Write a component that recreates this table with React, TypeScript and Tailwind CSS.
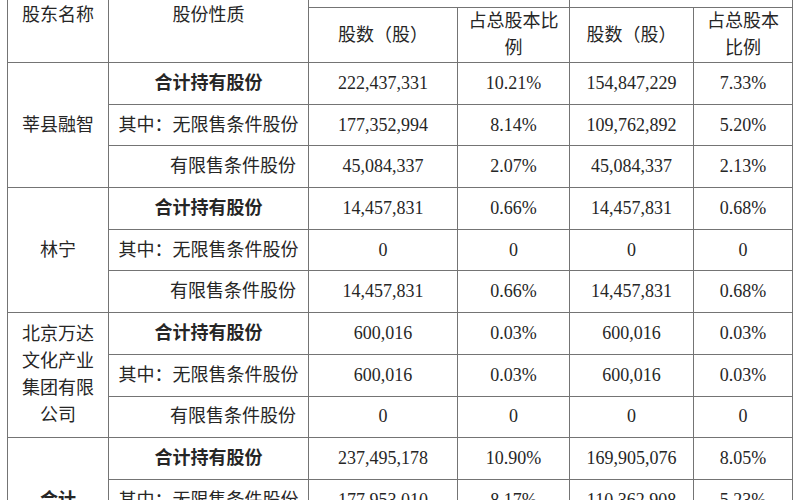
import React from "react"

type Kind = "total" | "free" | "locked"

interface Row {
  kind: Kind
  before: string
  beforePct: string
  after: string
  afterPct: string
}

interface Group {
  name: string
  bold?: boolean
  rows: Row[]
}

const LABELS: Record<Kind, string> = {
  total: "合计持有股份",
  free: "其中：无限售条件股份",
  locked: "有限售条件股份",
}

const GROUPS: Group[] = [
  {
    name: "莘县融智",
    rows: [
      { kind: "total", before: "222,437,331", beforePct: "10.21%", after: "154,847,229", afterPct: "7.33%" },
      { kind: "free", before: "177,352,994", beforePct: "8.14%", after: "109,762,892", afterPct: "5.20%" },
      { kind: "locked", before: "45,084,337", beforePct: "2.07%", after: "45,084,337", afterPct: "2.13%" },
    ],
  },
  {
    name: "林宁",
    rows: [
      { kind: "total", before: "14,457,831", beforePct: "0.66%", after: "14,457,831", afterPct: "0.68%" },
      { kind: "free", before: "0", beforePct: "0", after: "0", afterPct: "0" },
      { kind: "locked", before: "14,457,831", beforePct: "0.66%", after: "14,457,831", afterPct: "0.68%" },
    ],
  },
  {
    name: "北京万达文化产业集团有限公司",
    rows: [
      { kind: "total", before: "600,016", beforePct: "0.03%", after: "600,016", afterPct: "0.03%" },
      { kind: "free", before: "600,016", beforePct: "0.03%", after: "600,016", afterPct: "0.03%" },
      { kind: "locked", before: "0", beforePct: "0", after: "0", afterPct: "0" },
    ],
  },
  {
    name: "合计",
    bold: true,
    rows: [
      { kind: "total", before: "237,495,178", beforePct: "10.90%", after: "169,905,076", afterPct: "8.05%" },
      { kind: "free", before: "177,953,010", beforePct: "8.17%", after: "110,362,908", afterPct: "5.23%" },
      { kind: "locked", before: "59,542,168", beforePct: "2.73%", after: "59,542,168", afterPct: "2.82%" },
    ],
  },
]

const cell = "border border-[#747474] px-[6px] text-center align-middle"

export default function App() {
  return (
    <div
      className="w-[800px] h-[500px] overflow-hidden bg-white text-[#262626] text-[18px] leading-[27px]"
      style={{ fontFamily: '"Liberation Serif", "Noto Sans CJK SC", serif' }}
    >
      {/* table is scrolled up: its top header row is cut off in the shot */}
      <div className="pl-[7px] -mt-[32px]">
        <table className="table-fixed border-collapse w-[785px]">
          <colgroup>
            <col className="w-[101px]" />
            <col className="w-[200px]" />
            <col className="w-[149px]" />
            <col className="w-[112px]" />
            <col className="w-[124px]" />
            <col className="w-[99px]" />
          </colgroup>
          <thead>
            <tr className="h-[39px]">
              <th rowSpan={2} className={`${cell} font-normal`}>股东名称</th>
              <th rowSpan={2} className={`${cell} font-normal`}>股份性质</th>
              <th colSpan={2} className={cell} />
              <th colSpan={2} className={cell} />
            </tr>
            <tr className="h-[55px]">
              <th className={`${cell} font-normal`}>股数（股）</th>
              <th className={`${cell} font-normal`}>占总股本比例</th>
              <th className={`${cell} font-normal`}>股数（股）</th>
              <th className={`${cell} font-normal`}>占总股本比例</th>
            </tr>
          </thead>
          <tbody>
            {GROUPS.map((g) =>
              g.rows.map((r, i) => (
                <tr key={g.name + r.kind} className="h-[41.7px]">
                  {i === 0 && (
                    <td rowSpan={g.rows.length} className={`${cell} ${g.bold ? "font-bold" : ""}`}>
                      {g.name}
                    </td>
                  )}
                  <td
                    className={
                      r.kind === "total"
                        ? `${cell} font-bold`
                        : r.kind === "locked"
                        ? "border border-[#747474] pr-[12px] text-right align-middle"
                        : cell
                    }
                  >
                    {LABELS[r.kind]}
                  </td>
                  <td className={cell}>{r.before}</td>
                  <td className={cell}>{r.beforePct}</td>
                  <td className={cell}>{r.after}</td>
                  <td className={cell}>{r.afterPct}</td>
                </tr>
              ))
            )}
          </tbody>
        </table>
      </div>
    </div>
  )
}
